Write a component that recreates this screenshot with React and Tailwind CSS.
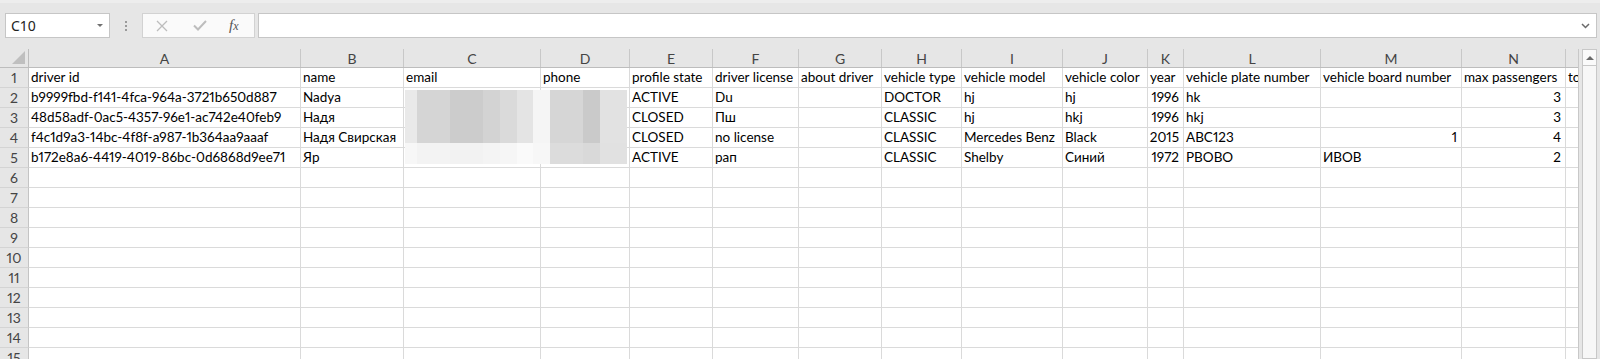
import React from 'react';

const columns = [
  { key: 'A', w: 'w-[272px]' },
  { key: 'B', w: 'w-[103px]' },
  { key: 'C', w: 'w-[137px]' },
  { key: 'D', w: 'w-[89px]' },
  { key: 'E', w: 'w-[83px]' },
  { key: 'F', w: 'w-[86px]' },
  { key: 'G', w: 'w-[83px]' },
  { key: 'H', w: 'w-[80px]' },
  { key: 'I', w: 'w-[101px]' },
  { key: 'J', w: 'w-[85px]' },
  { key: 'K', w: 'w-[36px]' },
  { key: 'L', w: 'w-[137px]' },
  { key: 'M', w: 'w-[141px]' },
  { key: 'N', w: 'w-[104px]' },
  { key: 'O', w: 'w-[13px]' },
];

const data = [
  ['driver id', 'name', 'email', 'phone', 'profile state', 'driver license', 'about driver', 'vehicle type', 'vehicle model', 'vehicle color', 'year', 'vehicle plate number', 'vehicle board number', 'max passengers', 'total rides'],
  ['b9999fbd-f141-4fca-964a-3721b650d887', 'Nadya', '', '', 'ACTIVE', 'Du', '', 'DOCTOR', 'hj', 'hj', 1996, 'hk', '', 3, ''],
  ['48d58adf-0ac5-4357-96e1-ac742e40feb9', 'Надя', '', '', 'CLOSED', 'Пш', '', 'CLASSIC', 'hj', 'hkj', 1996, 'hkj', '', 3, ''],
  ['f4c1d9a3-14bc-4f8f-a987-1b364aa9aaaf', 'Надя Свирская', '', '', 'CLOSED', 'no license', '', 'CLASSIC', 'Mercedes Benz', 'Black', 2015, 'ABC123', 1, 4, ''],
  ['b172e8a6-4419-4019-86bc-0d6868d9ee71', 'Яр', '', '', 'ACTIVE', 'рап', '', 'CLASSIC', 'Shelby', 'Синий', 1972, 'РВОВО', 'ИВОВ', 2, ''],
];

// pixelated blur over the private columns
const emailBlur = [
  { w: 'w-[12px]', top: 'bg-[#e9e9e9]', bottom: 'bg-[#f7f7f7]' },
  { w: 'w-[33px]', top: 'bg-[#d5d5d5]', bottom: 'bg-[#f3f3f3]' },
  { w: 'w-[33px]', top: 'bg-[#cccccc]', bottom: 'bg-[#f2f2f2]' },
  { w: 'w-[17px]', top: 'bg-[#d3d3d3]', bottom: 'bg-[#f4f4f4]' },
  { w: 'w-[17px]', top: 'bg-[#dadada]', bottom: 'bg-[#f6f6f6]' },
  { w: 'w-[16px]', top: 'bg-[#e4e4e4]', bottom: 'bg-[#fafafa]' },
];

const phoneBlur = [
  { w: 'w-[17px]', top: 'bg-[#f5f5f5]', bottom: 'bg-[#f7f7f7]' },
  { w: 'w-[33px]', top: 'bg-[#d6d6d6]', bottom: 'bg-[#dcdcdc]' },
  { w: 'w-[17px]', top: 'bg-[#cacaca]', bottom: 'bg-[#d9d9d9]' },
  { w: 'w-[27px]', top: 'bg-[#e2e2e2]', bottom: 'bg-[#e1e1e1]' },
];

const BlurBlock = ({ cells, className }) => (
  <div className={`absolute flex ${className}`}>
    {cells.map((c, i) => (
      <div key={i} className={`flex flex-col ${c.w}`}>
        <div className={`h-[53px] ${c.top}`} />
        <div className={`h-[21px] ${c.bottom}`} />
      </div>
    ))}
  </div>
);

const FormulaBar = () => (
  <div className="relative h-[49px] bg-[#e6e6e6] font-['Noto_Sans',sans-serif]">
    <div className="h-[3px] bg-[#ededed]" />
    <div className="flex items-start pt-[10px] pl-[5px] pr-[3px]">
      <div className="flex h-[25px] w-[105px] items-center justify-between border border-[#c6c6c6] bg-white pl-[5px] pr-[6px]">
        <span className="text-[14px] leading-none text-[#222]">C10</span>
        <span className="h-0 w-0 border-x-[3px] border-t-[3px] border-x-transparent border-t-[#707070]" />
      </div>
      <div className="flex h-[25px] w-[32px] flex-col items-center justify-center gap-[2px]">
        <span className="h-[2px] w-[2px] bg-[#9a9a9a]" />
        <span className="h-[2px] w-[2px] bg-[#9a9a9a]" />
        <span className="h-[2px] w-[2px] bg-[#9a9a9a]" />
      </div>
      <div className="flex h-[25px] w-[113px] items-center border border-[#d2d2d2] bg-[#fafafa]">
        <svg className="ml-[13px]" width="12" height="12" viewBox="0 0 12 12" fill="none" stroke="#bdbdbd" strokeWidth="1.3">
          <path d="M1 1 L11 11 M11 1 L1 11" />
        </svg>
        <svg className="ml-[25px]" width="14" height="11" viewBox="0 0 14 11" fill="none" stroke="#bdbdbd" strokeWidth="2">
          <path d="M1 5.5 L5 9.5 L13 1" />
        </svg>
        <span className="ml-[22px] font-['Liberation_Serif',serif] text-[15px] italic leading-none text-[#555]">
          f<span className="text-[12px]">x</span>
        </span>
      </div>
      <div className="ml-[3px] flex h-[25px] flex-1 items-center justify-end border border-[#c6c6c6] bg-white pr-[6px]">
        <svg width="9" height="6" viewBox="0 0 9 6" fill="none" stroke="#6a6a6a" strokeWidth="1.5">
          <path d="M1 1 L4.5 4.5 L8 1" />
        </svg>
      </div>
    </div>
  </div>
);

const Sheet = () => (
  <div className="flex h-[310px] overflow-hidden">
    <div className="relative w-[1579px] overflow-hidden border-r border-[#c8c8c8] bg-white font-['Lato',sans-serif] text-[13.5px] text-black proportional-nums">
      {/* column header row */}
      <div className="flex h-[19px] border-b border-[#bdbdbd] bg-[#e6e6e6] text-[#444]">
        <div className="relative w-[29px] shrink-0 border-r border-[#bdbdbd]">
          <span className="absolute bottom-[3px] right-[3px] h-0 w-0 border-b-[13px] border-l-[13px] border-b-[#bfbfbf] border-l-transparent" />
        </div>
        {columns.map(c => (
          <div key={c.key} className={`${c.w} shrink-0 border-r border-[#c8c8c8] text-center text-[14px] leading-[19px]`}>
            {c.key !== 'O' && c.key}
          </div>
        ))}
      </div>

      {Array.from({ length: 15 }).map((_, r) => (
        <div key={r} className="flex h-[20px]">
          <div className="w-[29px] shrink-0 border-r border-b border-[#c4c4c4] border-b-[#d4d4d4] bg-[#e6e6e6] text-center text-[14px] leading-[20px] text-[#444]">
            {r + 1}
          </div>
          {columns.map((c, i) => {
            const v = data[r]?.[i];
            const isNum = typeof v === 'number';
            return (
              <div
                key={c.key}
                className={`${c.w} flex shrink-0 items-end overflow-hidden whitespace-nowrap border-r border-b border-[#dadada] pb-[1px] leading-[18px] ${isNum ? 'justify-end pr-[4px]' : 'pl-[2px]'}`}
              >
                {v === '' || v === undefined ? null : String(v)}
              </div>
            );
          })}
        </div>
      ))}

      <BlurBlock cells={emailBlur} className="left-[405px] top-[41px]" />
      <BlurBlock cells={phoneBlur} className="left-[533px] top-[41px]" />
    </div>

    {/* vertical scrollbar */}
    <div className="flex flex-1 flex-col bg-[#e6e6e6] pl-[3px] pr-[3px]">
      <div className="flex h-[17px] items-center justify-center border border-[#c8c8c8] bg-[#fafafa]">
        <span className="h-0 w-0 border-x-[4px] border-b-[4px] border-x-transparent border-b-[#6a6a6a]" />
      </div>
      <div className="flex-1 border border-t-0 border-[#c8c8c8] bg-[#f7f7f7]" />
    </div>
  </div>
);

export default function App() {
  return (
    <div className="h-[359px] w-[1600px] overflow-hidden bg-[#e6e6e6]">
      <FormulaBar />
      <Sheet />
    </div>
  );
}
